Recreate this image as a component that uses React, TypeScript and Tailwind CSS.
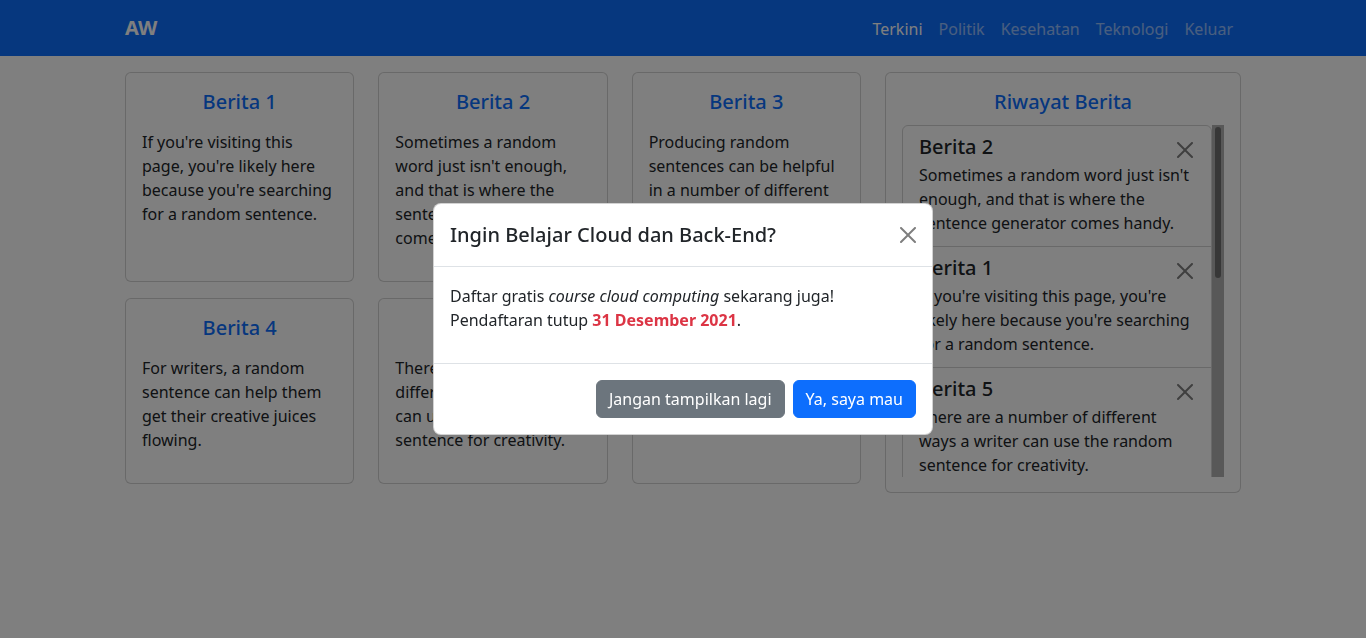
import { useState } from "react";

type News = { id: number; title: string; body: string };

const news: News[] = [
  {
    id: 1,
    title: "Berita 1",
    body: "If you're visiting this page, you're likely here because you're searching for a random sentence.",
  },
  {
    id: 2,
    title: "Berita 2",
    body: "Sometimes a random word just isn't enough, and that is where the sentence generator comes handy.",
  },
  {
    id: 3,
    title: "Berita 3",
    body: "Producing random sentences can be helpful in a number of different ways.",
  },
  {
    id: 4,
    title: "Berita 4",
    body: "For writers, a random sentence can help them get their creative juices flowing.",
  },
  {
    id: 5,
    title: "Berita 5",
    body: "There are a number of different ways a writer can use the random sentence for creativity.",
  },
  {
    id: 6,
    title: "Berita 6",
    body: "It can also be a fun way to surprise others with something new.",
  },
];

const history = [2, 1, 5, 4, 3, 6];

function CloseIcon({ size = 16 }: { size?: number }) {
  return (
    <svg width={size} height={size} viewBox="0 0 16 16" fill="#000" className="block">
      <path d="M.293.293a1 1 0 0 1 1.414 0L8 6.586 14.293.293a1 1 0 1 1 1.414 1.414L9.414 8l6.293 6.293a1 1 0 0 1-1.414 1.414L8 9.414l-6.293 6.293a1 1 0 0 1-1.414-1.414L6.586 8 .293 1.707a1 1 0 0 1 0-1.414z" />
    </svg>
  );
}

function Navbar() {
  const links = ["Terkini", "Politik", "Kesehatan", "Teknologi", "Keluar"];
  return (
    <nav className="bg-[#0d6efd] py-2">
      <div className="w-[1140px] mx-auto px-3 flex items-center justify-between">
        <a className="py-[5px] text-[20px] leading-[30px] font-bold text-white">AW</a>
        <ul className="flex">
          {links.map((l, i) => (
            <li key={l}>
              <a
                className={
                  i === 0
                    ? "block px-2 pt-[9px] pb-[7px] leading-6 text-white"
                    : "block px-2 pt-[9px] pb-[7px] leading-6 text-white/55"
                }
              >
                {l}
              </a>
            </li>
          ))}
        </ul>
      </div>
    </nav>
  );
}

function NewsCard({ item }: { item: News }) {
  return (
    <div className="border border-black/[0.175] rounded-md bg-white px-4 pt-[17px] pb-[15px]">
      <h5 className="text-center text-[20px] leading-6 font-medium text-[#0d6efd] mb-4">
        {item.title}
      </h5>
      <p className="leading-6 mb-4">{item.body}</p>
    </div>
  );
}

function Riwayat() {
  return (
    <div className="border border-black/[0.175] rounded-md bg-white px-4 pt-[17px] pb-[15px] w-full">
      <h5 className="text-center text-[20px] leading-6 font-medium text-[#0d6efd] mb-[11px]">
        Riwayat Berita
      </h5>
      <div className="h-[352px] flex">
        <div className="flex-1 overflow-hidden">
          <ul className="border border-black/[0.175] rounded-md">
            {history.map((id, i) => {
              const item = news.find((n) => n.id === id)!;
              return (
                <li
                  key={id}
                  className={
                    i === 0
                      ? "px-4 pt-[9px] pb-[11px]"
                      : "px-4 pt-[9px] pb-[11px] border-t border-black/[0.175]"
                  }
                >
                  <div className="flex justify-between h-6 mb-1">
                    <h5 className="text-[20px] leading-6 font-medium">{item.title}</h5>
                    <button className="p-1 opacity-50 translate-x-[2px] translate-y-[3px]">
                      <CloseIcon size={16} />
                    </button>
                  </div>
                  <p className="leading-6">{item.body}</p>
                </li>
              );
            })}
          </ul>
        </div>
        <div className="w-3 bg-[#b0b0b0] pt-[2px]">
          <div className="mx-[3px] h-[151px] rounded-full bg-[#6e6e6e]" />
        </div>
      </div>
    </div>
  );
}

function Modal({ onClose }: { onClose: () => void }) {
  return (
    <div className="fixed inset-0 bg-black/50 flex items-center justify-center">
      <div className="w-[500px] bg-white rounded-lg border border-black/[0.175]">
        <div className="flex items-center justify-between p-4 border-b border-[#dee2e6]">
          <h5 className="text-[20px] leading-[30px] font-medium">
            Ingin Belajar Cloud dan Back-End?
          </h5>
          <button className="p-2 -m-2 opacity-50" onClick={onClose}>
            <CloseIcon size={16} />
          </button>
        </div>
        <div className="px-4 pt-[17px] pb-[15px]">
          <p className="leading-6 mb-4">
            Daftar gratis <em>course cloud computing</em> sekarang juga!
            <br />
            Pendaftaran tutup{" "}
            <strong className="font-bold text-[#dc3545]">31 Desember 2021</strong>.
          </p>
        </div>
        <div className="flex justify-end gap-2 p-4 border-t border-[#dee2e6]">
          <button
            className="bg-[#6c757d] text-white px-3 py-[6px] leading-6 rounded-md border border-[#6c757d]"
            onClick={onClose}
          >
            Jangan tampilkan lagi
          </button>
          <button
            className="bg-[#0d6efd] text-white px-3 py-[6px] leading-6 rounded-md border border-[#0d6efd]"
            onClick={onClose}
          >
            Ya, saya mau
          </button>
        </div>
      </div>
    </div>
  );
}

export default function App() {
  const [open, setOpen] = useState(true);
  return (
    <div
      className="min-h-[638px] bg-white text-[#212529] text-base"
      style={{ fontFamily: '"Noto Sans", "Open Sans", sans-serif' }}
    >
      <Navbar />
      <div className="w-[1140px] mx-auto px-3 mt-4 flex gap-6 items-start">
        <div className="w-[736px] grid grid-cols-3 gap-x-6 gap-y-4">
          {news.map((n) => (
            <NewsCard key={n.id} item={n} />
          ))}
        </div>
        <div className="w-[356px]">
          <Riwayat />
        </div>
      </div>
      {open && <Modal onClose={() => setOpen(false)} />}
    </div>
  );
}
